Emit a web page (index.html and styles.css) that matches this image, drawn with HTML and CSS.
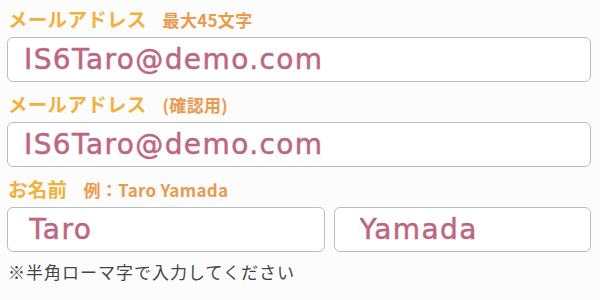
FILE: index.html
```html
<!DOCTYPE html>
<html lang="ja">
<head>
<meta charset="utf-8">
<link rel="stylesheet" href="styles.css">
</head>
<body>
<form class="form">
  <div class="field">
    <label class="label">メールアドレス<span class="sub">最大45文字</span></label>
    <input class="input" type="text" value="IS6Taro@demo.com">
  </div>
  <div class="field">
    <label class="label">メールアドレス<span class="sub">(確認用)</span></label>
    <input class="input" type="text" value="IS6Taro@demo.com">
  </div>
  <div class="field">
    <label class="label">お名前<span class="sub">例：Taro Yamada</span></label>
    <div class="name-row">
      <input class="input input--first" type="text" value="Taro">
      <input class="input input--last" type="text" value="Yamada">
    </div>
  </div>
  <p class="note">※半角ローマ字で入力してください</p>
</form>
</body>
</html>
```
FILE: styles.css
```css
html, body {
  margin: 0;
  background: #fcfcfc;
}
.form {
  padding: 7px 9px 0 7px;
  display: flex;
  flex-direction: column;
  gap: 10px;
  font-family: "Noto Sans CJK JP", "Noto Sans", sans-serif;
}
.field {
  display: flex;
  flex-direction: column;
  gap: 6px;
}
.label {
  display: block;
  height: 24px;
  line-height: 24px;
  padding-left: 1px;
  font-size: 19.5px;
  font-weight: 700;
  letter-spacing: 0.3px;
  color: #f2b03c;
}
.sub {
  margin-left: 16px;
  font-size: 17px;
  letter-spacing: 0.3px;
  color: #e99a4e;
}
.input {
  display: block;
  width: 100%;
  box-sizing: border-box;
  height: 45px;
  margin: 0;
  padding: 0 16px;
  border: 1px solid #bdbdbd;
  border-radius: 6px;
  background: #fff;
  font-family: "DejaVu Sans", "Noto Sans CJK JP", sans-serif;
  font-size: 28px;
  letter-spacing: 1.4px;
  color: #bd6682;
  -webkit-text-stroke: 0.5px #bd6682;
  outline: none;
}
.name-row {
  display: grid;
  grid-template-columns: 317fr 257fr;
  gap: 9px;
}
.input--first {
  padding-left: 21px;
}
.input--last {
  padding-left: 25px;
}
.note {
  margin: 0;
  line-height: 20px;
  padding-left: 1px;
  font-size: 17px;
  letter-spacing: 1px;
  color: #444;
}
```
